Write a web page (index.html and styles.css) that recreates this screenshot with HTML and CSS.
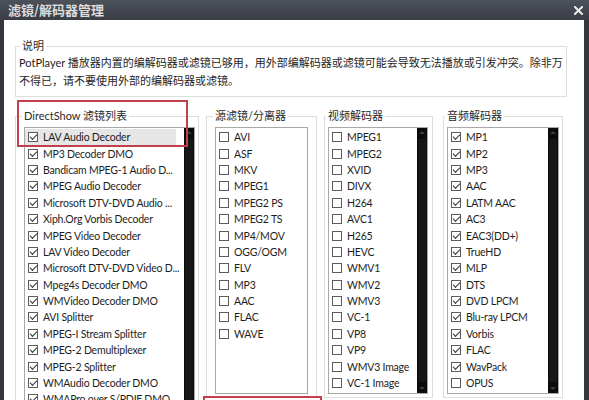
FILE: index.html
```html
<!DOCTYPE html>
<html lang="zh-CN">
<head>
<meta charset="utf-8">
<title>滤镜/解码器管理</title>
<link rel="stylesheet" href="styles.css">
</head>
<body>
<div class="window">
  <div class="titlebar">
    <span class="title">滤镜/解码器管理</span>
    <svg class="close" viewBox="0 0 9 9" width="9" height="9"><path d="M1 1L8 8M8 1L1 8" stroke="#ececec" stroke-width="2" stroke-linecap="square"/></svg>
  </div>
  <div class="client">
    <fieldset class="group desc">
      <legend>说明</legend>
      <p class="desc-text">PotPlayer 播放器内置的编解码器或滤镜已够用，用外部编解码器或滤镜可能会导致无法播放或引发冲突。除非万不得已，请不要使用外部的编解码器或滤镜。</p>
    </fieldset>

    <div class="columns">
      <div class="col col-ds">
        <fieldset class="group">
          <legend>DirectShow 滤镜列表</legend>
          <div class="list">
            <ul class="items">
              <li class="item sel"><span class="cb on"></span>LAV Audio Decoder</li>
              <li class="item"><span class="cb on"></span>MP3 Decoder DMO</li>
              <li class="item"><span class="cb on"></span>Bandicam MPEG-1 Audio D...</li>
              <li class="item"><span class="cb on"></span>MPEG Audio Decoder</li>
              <li class="item"><span class="cb on"></span>Microsoft DTV-DVD Audio ...</li>
              <li class="item"><span class="cb on"></span>Xiph.Org Vorbis Decoder</li>
              <li class="item"><span class="cb on"></span>MPEG Video Decoder</li>
              <li class="item"><span class="cb on"></span>LAV Video Decoder</li>
              <li class="item"><span class="cb on"></span>Microsoft DTV-DVD Video D...</li>
              <li class="item"><span class="cb on"></span>Mpeg4s Decoder DMO</li>
              <li class="item"><span class="cb on"></span>WMVideo Decoder DMO</li>
              <li class="item"><span class="cb on"></span>AVI Splitter</li>
              <li class="item"><span class="cb on"></span>MPEG-I Stream Splitter</li>
              <li class="item"><span class="cb on"></span>MPEG-2 Demultiplexer</li>
              <li class="item"><span class="cb on"></span>MPEG-2 Splitter</li>
              <li class="item"><span class="cb on"></span>WMAudio Decoder DMO</li>
              <li class="item"><span class="cb on"></span>WMAPro over S/PDIF DMO</li>
              <li class="item"><span class="cb on"></span>WMSpeech Decoder DMO</li>
            </ul>
            <div class="scrollbar"><span class="sb-arrow up"></span><span class="sb-track"></span><span class="sb-arrow down"></span></div>
          </div>
        </fieldset>
        <div class="mark mark-ds"></div>
      </div>

      <div class="col col-src">
        <fieldset class="group">
          <legend>源滤镜/分离器</legend>
          <div class="list">
            <ul class="items">
              <li class="item"><span class="cb"></span>AVI</li>
              <li class="item"><span class="cb"></span>ASF</li>
              <li class="item"><span class="cb"></span>MKV</li>
              <li class="item"><span class="cb"></span>MPEG1</li>
              <li class="item"><span class="cb"></span>MPEG2 PS</li>
              <li class="item"><span class="cb"></span>MPEG2 TS</li>
              <li class="item"><span class="cb"></span>MP4/MOV</li>
              <li class="item"><span class="cb"></span>OGG/OGM</li>
              <li class="item"><span class="cb"></span>FLV</li>
              <li class="item"><span class="cb"></span>MP3</li>
              <li class="item"><span class="cb"></span>AAC</li>
              <li class="item"><span class="cb"></span>FLAC</li>
              <li class="item"><span class="cb"></span>WAVE</li>
            </ul>
          </div>
        </fieldset>
        <div class="mark mark-src"></div>
      </div>

      <div class="col col-vid">
        <fieldset class="group">
          <legend>视频解码器</legend>
          <div class="list">
            <ul class="items">
              <li class="item"><span class="cb"></span>MPEG1</li>
              <li class="item"><span class="cb"></span>MPEG2</li>
              <li class="item"><span class="cb"></span>XVID</li>
              <li class="item"><span class="cb"></span>DIVX</li>
              <li class="item"><span class="cb"></span>H264</li>
              <li class="item"><span class="cb"></span>AVC1</li>
              <li class="item"><span class="cb"></span>H265</li>
              <li class="item"><span class="cb"></span>HEVC</li>
              <li class="item"><span class="cb"></span>WMV1</li>
              <li class="item"><span class="cb"></span>WMV2</li>
              <li class="item"><span class="cb"></span>WMV3</li>
              <li class="item"><span class="cb"></span>VC-1</li>
              <li class="item"><span class="cb"></span>VP8</li>
              <li class="item"><span class="cb"></span>VP9</li>
              <li class="item"><span class="cb"></span>WMV3 Image</li>
              <li class="item"><span class="cb"></span>VC-1 Image</li>
              <li class="item"><span class="cb"></span>VP6</li>
            </ul>
            <div class="scrollbar"><span class="sb-arrow up"></span><span class="sb-track"></span><span class="sb-arrow down"></span></div>
          </div>
        </fieldset>
      </div>

      <div class="col col-aud">
        <fieldset class="group">
          <legend>音频解码器</legend>
          <div class="list">
            <ul class="items">
              <li class="item"><span class="cb on"></span>MP1</li>
              <li class="item"><span class="cb on"></span>MP2</li>
              <li class="item"><span class="cb on"></span>MP3</li>
              <li class="item"><span class="cb on"></span>AAC</li>
              <li class="item"><span class="cb on"></span>LATM AAC</li>
              <li class="item"><span class="cb on"></span>AC3</li>
              <li class="item"><span class="cb on"></span>EAC3(DD+)</li>
              <li class="item"><span class="cb on"></span>TrueHD</li>
              <li class="item"><span class="cb on"></span>MLP</li>
              <li class="item"><span class="cb on"></span>DTS</li>
              <li class="item"><span class="cb on"></span>DVD LPCM</li>
              <li class="item"><span class="cb on"></span>Blu-ray LPCM</li>
              <li class="item"><span class="cb on"></span>Vorbis</li>
              <li class="item"><span class="cb on"></span>FLAC</li>
              <li class="item"><span class="cb on"></span>WavPack</li>
              <li class="item"><span class="cb"></span>OPUS</li>
              <li class="item"><span class="cb"></span>ALAC</li>
            </ul>
            <div class="scrollbar"><span class="sb-arrow up"></span><span class="sb-track"></span><span class="sb-arrow down"></span></div>
          </div>
        </fieldset>
      </div>
    </div>
  </div>
</div>
</body>
</html>
```

FILE: styles.css
```css
* { box-sizing: border-box; }

html, body {
  margin: 0;
  padding: 0;
  overflow: hidden;
}

body {
  background: #33363d;
  font-family: Lato, "Noto Sans CJK SC", sans-serif;
  font-size: 11px;
  color: #1e1e1e;
}

.window {
  height: 400px;
  display: flex;
  flex-direction: column;
  background: #33363d;
  overflow: hidden;
}

.titlebar {
  height: 20px;
  flex: none;
  display: flex;
  align-items: center;
  justify-content: space-between;
  padding: 0 6px 0 8px;
  background: linear-gradient(#4d515a, #3a3d45);
}

.title {
  color: #dcdcdc;
  font-family: "Noto Sans CJK SC", sans-serif;
  font-size: 13px;
  font-weight: 700;
  line-height: 20px;
}

.close { display: block; }

.client {
  flex: 1;
  min-height: 0;
  margin: 0 5px 0 4px;
  background: #fff;
  padding: 18px 0 0 11px;
}

.group {
  margin: 0;
  border: 1px solid #dddddd;
  min-width: 0;
}

.group > legend {
  padding: 0 2px;
  margin-left: -2px;
  font-size: 11px;
  line-height: 16px;
  color: #2a2a2a;
}

.desc {
  width: 552px;
  padding: 0 3px 6px 3px;
}

.desc > legend { margin-left: 1px; }

.desc-text {
  margin: 0;
  line-height: 18px;
  color: #1e1e1e;
}

.columns {
  display: flex;
  align-items: flex-start;
  margin-top: 11px;
}

.col {
  position: relative;
  flex: none;
}

.col .group { width: 100%; }

.col-ds { width: 184px; }
.col-ds .group { padding: 0 3px 3px 8px; }

.col-src { width: 111px; margin-left: 7px; }
.col-src .group { padding: 0 8px 3px 8px; }

.col-vid { width: 109px; margin-left: 7px; }
.col-vid .group { padding: 0 4px 3px 3px; }

.col-aud { width: 120px; margin-left: 10px; }
.col-aud .group { padding: 0 3px 3px 3px; }

.list {
  margin-top: 3px;
  height: 267px;
  border: 1px solid #a8a8a8;
  background: #fff;
  display: flex;
  overflow: hidden;
}

.col-ds .list { height: 320px; }

.items {
  list-style: none;
  margin: 0;
  padding: 1px 0 0;
  flex: 1;
  min-width: 0;
}

.item {
  height: 16.4px;
  display: flex;
  align-items: center;
  gap: 5px;
  padding-left: 3px;
  white-space: nowrap;
  overflow: hidden;
  font-size: 10.5px;
  letter-spacing: -0.2px;
  color: #1e1e1e;
}

.item.sel {
  background: #e6e6e6;
  margin-right: 8px;
}

.cb {
  width: 10px;
  height: 10px;
  flex: none;
  border: 1px solid #5c5c5c;
  background: #fff;
  display: flex;
  align-items: center;
  justify-content: center;
}

.cb.on::after {
  content: "";
  width: 6px;
  height: 3px;
  border-left: 1px solid #333;
  border-bottom: 1px solid #333;
  transform: translateY(-1px) rotate(-45deg);
}

.scrollbar {
  width: 10px;
  flex: none;
  background: #0b0b0b;
  display: flex;
  flex-direction: column;
}

.sb-arrow {
  height: 9px;
  flex: none;
  display: flex;
  align-items: center;
  justify-content: center;
}

.sb-arrow::before {
  content: "";
  border-left: 3px solid transparent;
  border-right: 3px solid transparent;
}

.sb-arrow.up::before { border-bottom: 3px solid #3c3c3c; }
.sb-arrow.down::before { border-top: 3px solid #3c3c3c; }

.sb-track {
  flex: 1;
  margin: 2px 1px;
  background: #161616;
}

.mark {
  position: absolute;
  border: 2px solid #c23f4d;
  pointer-events: none;
}

.mark-ds {
  left: 2px;
  top: -8px;
  width: 171px;
  height: 47px;
}

.mark-src {
  left: -3px;
  top: 288px;
  width: 119px;
  height: 30px;
}
```
